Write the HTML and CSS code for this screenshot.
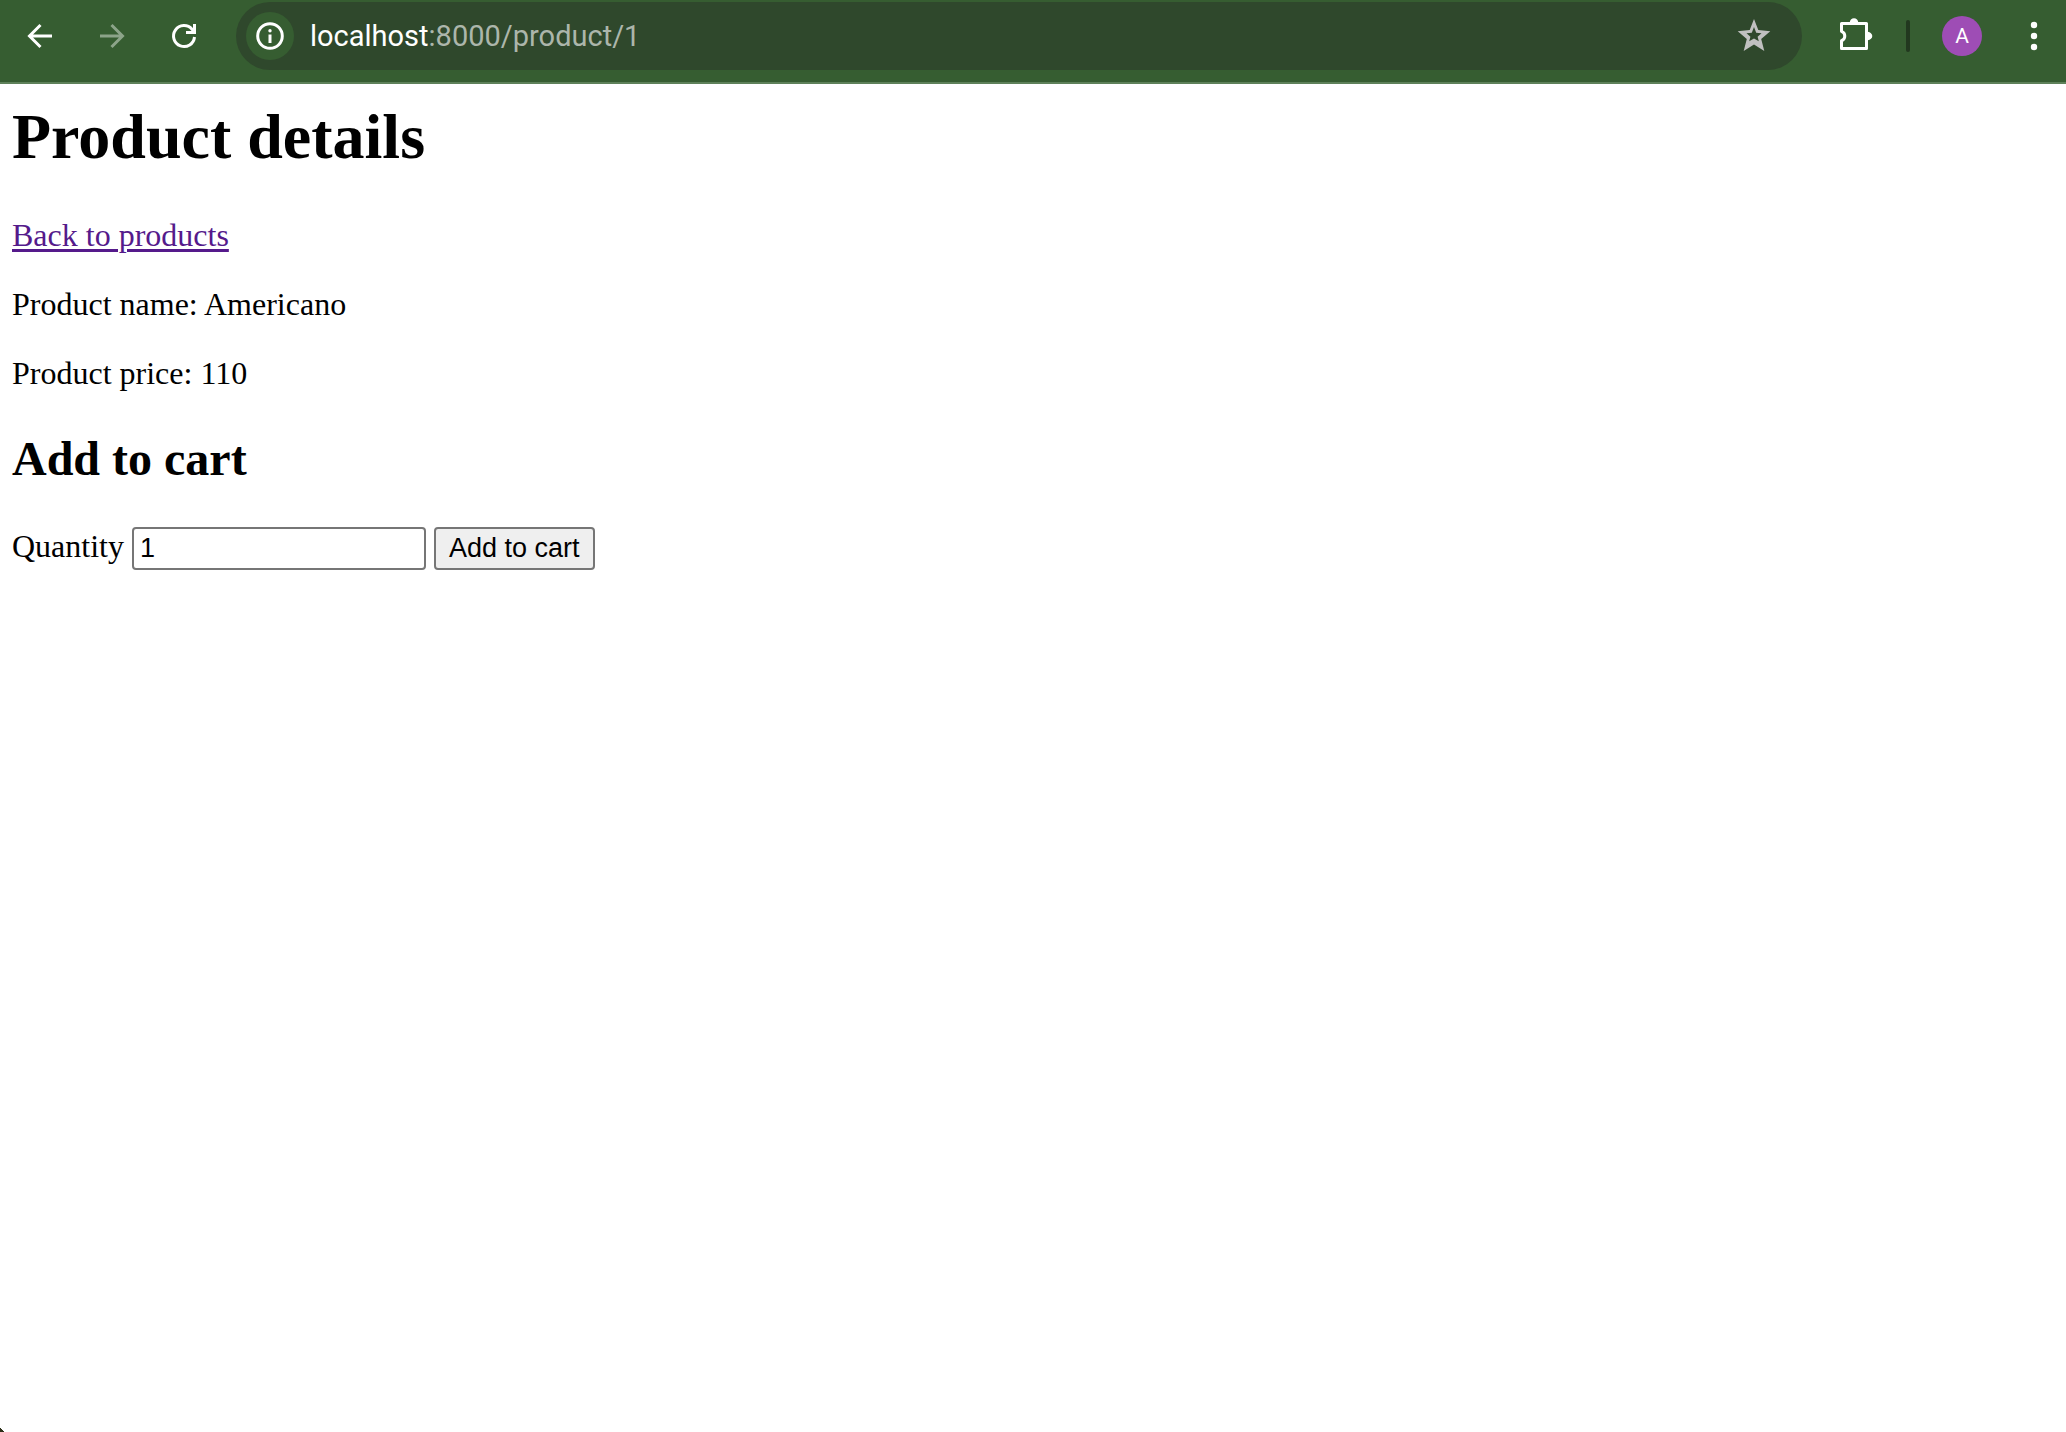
FILE: index.html
```html
<!DOCTYPE html>
<html lang="en">
<head>
<meta charset="utf-8">
<title>Product details</title>
<link rel="stylesheet" href="styles.css">
</head>
<body>
<header class="toolbar">
  <nav class="nav-buttons" aria-label="History">
    <button class="icon-button" type="button" aria-label="Back">
      <svg width="28" height="28" viewBox="0 0 28 28" fill="none" stroke="currentColor" stroke-width="3"><path d="M26 14H4M14.500 3L3.500 14L14.500 25"/></svg>
    </button>
    <button class="icon-button" type="button" aria-label="Forward" disabled>
      <svg width="28" height="28" viewBox="0 0 28 28" fill="none" stroke="currentColor" stroke-width="3"><path d="M2 14H24M13.500 3L24.500 14L13.500 25"/></svg>
    </button>
    <button class="icon-button" type="button" aria-label="Reload">
      <svg width="28" height="28" viewBox="0 0 28 28" fill="none" stroke="currentColor" stroke-width="3"><path d="M24.500 15A10.500 10.500 0 1 1 22 7.200L24 9.500"/><path d="M24.500 2V10.500H16"/></svg>
    </button>
  </nav>
  <div class="address-bar">
    <button class="site-info" type="button" aria-label="Site information">
      <svg width="28" height="28" viewBox="0 0 28 28"><circle cx="14" cy="14" r="12.300" fill="none" stroke="currentColor" stroke-width="3"/><path fill="currentColor" d="M12.500 12.500h3v8.500h-3z"/><circle cx="14" cy="8.800" r="1.700" fill="currentColor"/></svg>
    </button>
    <div class="address" role="textbox" aria-label="Address" contenteditable="true" spellcheck="false"><span class="address-host">localhost</span>:8000/product/1</div>
    <button class="icon-button bookmark" type="button" aria-label="Bookmark">
      <svg width="34" height="34" viewBox="0 0 34 34" fill="currentColor" fill-rule="evenodd"><path d="M17 0L21.300 11L33.300 12.200L24.200 20L27.300 32L17 25.500L6.700 32L9.800 20L.7 12.200L12.700 11ZM17 8L14.800 13.800L9.500 14.200L13.400 17.800L12.200 22.300L17 19.600L21.800 22.300L20.600 17.800L24.500 14.200L19.200 13.800Z"/></svg>
    </button>
  </div>
  <button class="icon-button extensions" type="button" aria-label="Extensions">
    <svg width="36" height="36" viewBox="0 0 36 36"><path fill="none" stroke="currentColor" stroke-width="3" stroke-linejoin="round" d="M3.500 5.500H28.500V30.500H3.500V22.700A5 5 0 0 0 3.500 13.300Z"/><path fill="currentColor" d="M11.700 5a4.300 4.800 0 0 1 8.600 0v1h-8.600zM29 13.700a5.300 4.300 0 0 1 0 8.600h-1v-8.600z"/></svg>
  </button>
  <span class="divider"></span>
  <button class="avatar" type="button" aria-label="Profile">A</button>
  <button class="icon-button menu" type="button" aria-label="Menu">
    <svg width="8" height="30" viewBox="0 0 8 30" fill="currentColor"><circle cx="4" cy="4" r="3.200"/><circle cx="4" cy="15" r="3.200"/><circle cx="4" cy="26" r="3.200"/></svg>
  </button>
</header>
<main class="page">
  <h1>Product details</h1>
  <a class="back-link" href="#products">Back to products</a>
  <p>Product name: Americano</p>
  <p>Product price: 110</p>
  <h2>Add to cart</h2>
  <form class="cart-form">
    <label for="quantity">Quantity</label>
    <input class="quantity" id="quantity" name="quantity" type="text" value="1">
    <button class="add-button" type="button">Add to cart</button>
  </form>
</main>
<span class="window-corner"></span>
</body>
</html>
```
FILE: styles.css
```css
* {
  box-sizing: border-box;
}

body {
  margin: 0;
  background: #fff;
  color: #000;
  font-family: "Liberation Serif", "Times New Roman", serif;
  font-size: 32px;
  line-height: 37px;
}

/* Browser toolbar */
.toolbar {
  display: flex;
  align-items: center;
  padding: 2px 8px 12px 16px;
  border-bottom: 2px solid #5e815a;
  background: #365d31;
  color: #fff;
  font-family: Roboto, sans-serif;
}

.nav-buttons {
  display: flex;
  gap: 24px;
  margin-right: 28px;
}

.icon-button {
  display: flex;
  align-items: center;
  justify-content: center;
  flex: none;
  width: 48px;
  height: 48px;
  padding: 0;
  border: 0;
  background: none;
  color: inherit;
}

.icon-button:disabled {
  color: #8ca489;
}

.address-bar {
  display: flex;
  align-items: center;
  flex: 1;
  min-width: 0;
  height: 68px;
  padding: 0 24px 0 10px;
  border-radius: 34px;
  background: #2f482c;
}

.site-info {
  display: flex;
  align-items: center;
  justify-content: center;
  flex: none;
  width: 48px;
  height: 48px;
  padding: 0;
  border: 0;
  border-radius: 50%;
  background: #365d31;
  color: #fff;
}

.address {
  flex: 1;
  min-width: 0;
  margin-left: 16px;
  color: #acb6ab;
  font-size: 29px;
  line-height: 36px;
  white-space: nowrap;
}

.address-host {
  color: #fff;
}

.bookmark {
  color: #c0c0c0;
}

.extensions {
  margin-left: 30px;
}

.divider {
  width: 4px;
  height: 32px;
  margin: 0 32px 0 26px;
  border-radius: 2px;
  background: #22381f;
}

.avatar {
  flex: none;
  width: 40px;
  height: 40px;
  margin-right: 28px;
  padding: 0;
  border: 0;
  border-radius: 50%;
  background: #9e4db5;
  color: #fff;
  font-family: Roboto, sans-serif;
  font-size: 21px;
  line-height: 40px;
}

/* Product page */
.page {
  padding: 16px 12px;
}

h1 {
  margin: 0 0 44px;
  font-size: 64px;
  line-height: 73px;
}

.back-link {
  color: #551a8b;
  text-decoration-thickness: 3px;
  text-underline-offset: 3px;
}

p {
  margin: 32px 0;
}

h2 {
  margin: 39px 0 41px;
  font-size: 48px;
  line-height: 55px;
}

.cart-form {
  display: flex;
  align-items: baseline;
  gap: 8px;
}

.quantity,
.add-button {
  height: 43px;
  border: 2px solid #767676;
  border-radius: 4px;
  color: #000;
  font-family: "Liberation Sans", Arial, sans-serif;
  font-size: 27px;
  line-height: 31px;
}

.quantity {
  width: 294px;
  padding: 4px 6px;
  background: #fff;
}

.add-button {
  padding: 4px 13px;
  background: #efefef;
}

/* Rounded lower corner of the window */
.window-corner {
  position: fixed;
  bottom: 0;
  left: 0;
  width: 4px;
  height: 4px;
  background: linear-gradient(45deg, #2d2f18 50%, #fff 50%);
}
```
